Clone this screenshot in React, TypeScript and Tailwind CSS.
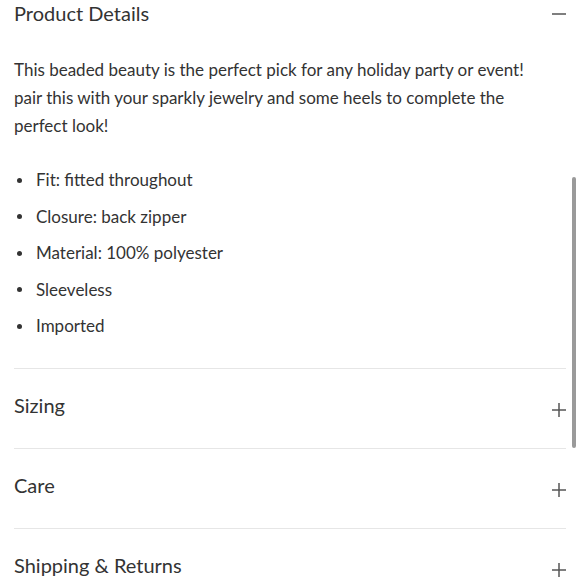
const bullets = [
  'Fit: fitted throughout',
  'Closure: back zipper',
  'Material: 100% polyester',
  'Sleeveless',
  'Imported',
];

const sections = ['Sizing', 'Care', 'Shipping & Returns'];

function PlusIcon() {
  return (
    <svg width="14" height="14" viewBox="0 0 14 14" className="mt-[3px] text-[#555]">
      <path d="M0 7h14M7 0v14" stroke="currentColor" strokeWidth="1.5" />
    </svg>
  );
}

function MinusIcon() {
  return (
    <svg width="14" height="14" viewBox="0 0 14 14" className="text-[#555]">
      <path d="M0 7h14" stroke="currentColor" strokeWidth="1.5" />
    </svg>
  );
}

export default function App() {
  return (
    <div
      className="relative h-[580px] w-[580px] overflow-hidden bg-white text-[#333333]"
      style={{ fontFamily: 'Lato, "Noto Sans", sans-serif' }}
    >
      <div className="pl-[14px] pr-[14px]">
        {/* open section */}
        <div className="flex h-[28px] items-center justify-between">
          <h2 className="mb-[3px] text-[20px] leading-none">Product Details</h2>
          <MinusIcon />
        </div>
        <p className="mt-[28px] max-w-[540px] text-[17px] leading-[28px]">
          This beaded beauty is the perfect pick for any holiday party or event! pair this with your
          sparkly jewelry and some heels to complete the perfect look!
        </p>
        <ul className="mt-[26px] flex flex-col gap-[8.5px] pb-[28px]">
          {bullets.map((b) => (
            <li key={b} className="flex h-[28px] items-center text-[17px]">
              <span className="ml-[3px] mr-[14px] h-[5px] w-[5px] rounded-full bg-[#333]" />
              {b}
            </li>
          ))}
        </ul>

        {sections.map((s) => (
          <div key={s} className="flex h-[80px] items-center justify-between border-t border-[#e6e6e6]">
            <span className="mb-[8px] text-[20px]">{s}</span>
            <PlusIcon />
          </div>
        ))}
      </div>

      {/* scrollbar thumb */}
      <div className="absolute right-[4px] top-[177px] h-[271px] w-[4px] rounded-full bg-[#9a9a9a]" />
    </div>
  );
}
